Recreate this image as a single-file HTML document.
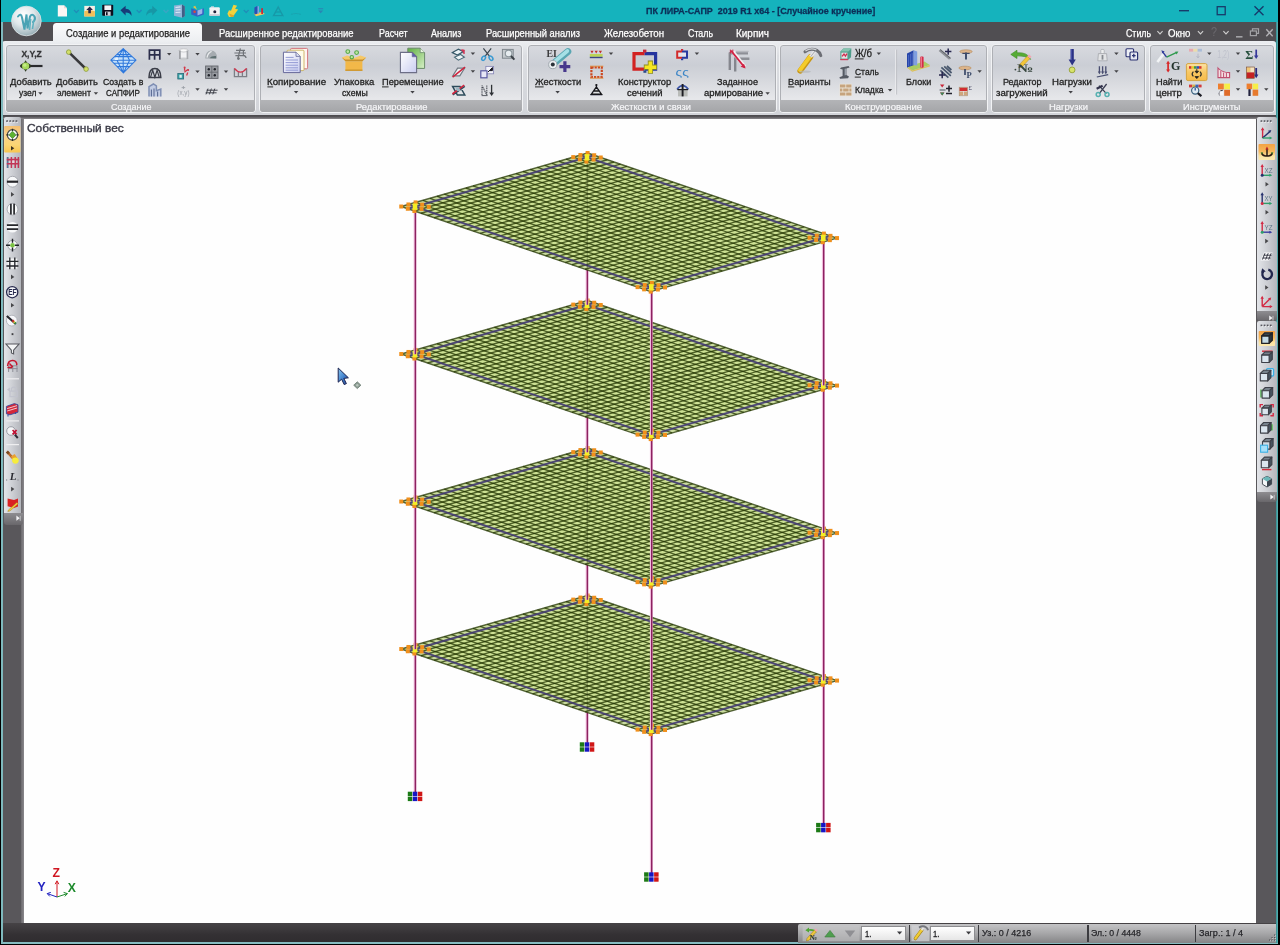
<!DOCTYPE html>
<html><head><meta charset="utf-8"><title>ПК ЛИРА-САПР</title>
<style>
html,body{margin:0;padding:0;background:#000;}
body{width:1280px;height:945px;position:relative;overflow:hidden;font-family:"Liberation Sans",sans-serif;}
.abs{position:absolute;}
.t{position:absolute;white-space:nowrap;line-height:1;transform-origin:0 50%;font-family:"Liberation Sans",sans-serif;}
div{box-sizing:border-box;}
.grp{position:absolute;top:44px;height:69px;border:1px solid #f2f3f5;border-radius:4px;background:linear-gradient(#d8dadf 0%,#cbced5 30%,#d6d8dd 52%,#e6e7ea 80%);overflow:hidden;box-shadow:0 0 0 1px #aeb0b5 inset;}
.grp .lb{position:absolute;left:0;right:0;top:55px;height:14px;background:linear-gradient(#b3b4b7,#a2a3a6);}
.sel{position:absolute;background:linear-gradient(#fbdc9c,#f5c35e 50%,#f3b440);border:1px solid #d9a446;border-radius:2px;}
</style></head><body>

<div class="abs" style="left:1px;top:0;width:1277.2px;height:943.6px;background:#15b3bd;"></div>
<div class="abs" style="left:2px;top:22px;width:1274px;height:20px;background:#504e52;"></div>
<div class="abs" style="left:2px;top:40.8px;width:1274px;height:74px;background:linear-gradient(#eceef1,#dcdee2 20%,#d2d4d9);border-radius:3px 3px 0 0;"></div>
<div class="abs" style="left:3px;top:114.5px;width:1272.8px;height:828px;background:#59575b;"></div><div class="abs" style="left:3px;top:114.5px;width:1272.8px;height:4.2px;background:linear-gradient(#4a484c,#545256 40%,#8b898d);"></div>
<div class="abs" style="left:3px;top:923px;width:1272.8px;height:19.5px;background:linear-gradient(#464346,#333033 60%,#2f2c2f);"></div>
<div class="abs" style="left:1px;top:942px;width:1277.2px;height:1.6px;background:#86bcc0;"></div>
<div class="abs" style="left:1.2px;top:22px;width:1.6px;height:921px;background:#7fb9bd;"></div>
<div class="abs" style="left:1275.8px;top:22px;width:2.4px;height:921px;background:linear-gradient(90deg,#338d92,#5db4b4);"></div>
<div class="abs" style="left:24px;top:118.6px;width:1231.8px;height:804.2px;background:#fefefe;"></div>
<div class="abs" style="left:21px;top:118.5px;width:3px;height:804.3px;background:linear-gradient(90deg,#6b696d,#8a888c);"></div>
<div class="abs" style="left:53px;top:23.3px;width:148.5px;height:19px;background:linear-gradient(#fbfbfc,#eceef1);border-radius:3.5px 3.5px 0 0;"></div>
<div class="t" style="left:646.00px;top:7.30px;font-size:9.2px;color:#0c2f58;transform:scaleX(0.9760);font-weight:bold;white-space:pre;-webkit-text-stroke:0.3px #0c2f58;">ПК ЛИРА-САПР  2019 R1 x64 - [Случайное кручение]</div>
<div class="t" style="left:65.50px;top:28.53px;font-size:10.0px;color:#1f1f1f;transform:scaleX(0.9411);-webkit-text-stroke:0.25px #1f1f1f;">Создание и редактирование</div>
<div class="t" style="left:218.50px;top:28.53px;font-size:10.0px;color:#fff;transform:scaleX(0.9466);-webkit-text-stroke:0.25px #fff;">Расширенное редактирование</div>
<div class="t" style="left:379.00px;top:28.53px;font-size:10.0px;color:#fff;transform:scaleX(0.8960);-webkit-text-stroke:0.25px #fff;">Расчет</div>
<div class="t" style="left:430.50px;top:28.53px;font-size:10.0px;color:#fff;transform:scaleX(0.9034);-webkit-text-stroke:0.25px #fff;">Анализ</div>
<div class="t" style="left:485.50px;top:28.53px;font-size:10.0px;color:#fff;transform:scaleX(0.9318);-webkit-text-stroke:0.25px #fff;">Расширенный анализ</div>
<div class="t" style="left:604.00px;top:28.53px;font-size:10.0px;color:#fff;transform:scaleX(0.9685);-webkit-text-stroke:0.25px #fff;">Железобетон</div>
<div class="t" style="left:687.50px;top:28.53px;font-size:10.0px;color:#fff;transform:scaleX(0.8835);-webkit-text-stroke:0.25px #fff;">Сталь</div>
<div class="t" style="left:736.00px;top:28.53px;font-size:10.0px;color:#fff;transform:scaleX(0.9945);-webkit-text-stroke:0.25px #fff;">Кирпич</div>
<div class="t" style="left:1126.00px;top:28.53px;font-size:10.0px;color:#fff;transform:scaleX(0.8792);-webkit-text-stroke:0.25px #fff;">Стиль</div>
<div class="t" style="left:1168.00px;top:28.53px;font-size:10.0px;color:#fff;transform:scaleX(0.9683);-webkit-text-stroke:0.25px #fff;">Окно</div>
<div class="grp" style="left:4.5px;width:251.5px;"><div class="lb"></div></div>
<div class="t" style="left:111.00px;top:101.55px;font-size:9.8px;color:#f6f6f8;transform:scaleX(0.9163);-webkit-text-stroke:0.2px #f6f6f8;">Создание</div>
<div class="grp" style="left:258.5px;width:264.5px;"><div class="lb"></div></div>
<div class="t" style="left:355.50px;top:101.55px;font-size:9.8px;color:#f6f6f8;transform:scaleX(0.9577);-webkit-text-stroke:0.2px #f6f6f8;">Редактирование</div>
<div class="grp" style="left:526.5px;width:250.0px;"><div class="lb"></div></div>
<div class="t" style="left:611.00px;top:101.55px;font-size:9.8px;color:#f6f6f8;transform:scaleX(0.9448);-webkit-text-stroke:0.2px #f6f6f8;">Жесткости и связи</div>
<div class="grp" style="left:779px;width:208.5px;"><div class="lb"></div></div>
<div class="t" style="left:845.00px;top:101.55px;font-size:9.8px;color:#f6f6f8;transform:scaleX(0.9691);-webkit-text-stroke:0.2px #f6f6f8;">Конструирование</div>
<div class="grp" style="left:990.5px;width:155.0px;"><div class="lb"></div></div>
<div class="t" style="left:1049.00px;top:101.55px;font-size:9.8px;color:#f6f6f8;transform:scaleX(0.9606);-webkit-text-stroke:0.2px #f6f6f8;">Нагрузки</div>
<div class="grp" style="left:1148.5px;width:126.5px;"><div class="lb"></div></div>
<div class="t" style="left:1183.00px;top:101.55px;font-size:9.8px;color:#f6f6f8;transform:scaleX(0.9410);-webkit-text-stroke:0.2px #f6f6f8;">Инструменты</div>
<div class="abs" style="left:3.5px;top:117px;width:17.8px;height:396px;background:linear-gradient(90deg,#e3e5e9,#cfd1d6 45%,#b4b6bc);border-radius:2px 2px 0 0;"></div>
<div class="abs" style="left:3.5px;top:512.5px;width:19px;height:12px;background:linear-gradient(#8e8d91,#69676b);border-radius:0 0 3px 3px;"></div>
<div class="abs" style="left:1257px;top:117px;width:19.5px;height:194.5px;background:linear-gradient(90deg,#e3e5e9,#cfd1d6 45%,#b4b6bc);border-radius:2px 2px 0 0;"></div>
<div class="abs" style="left:1257px;top:311px;width:19.5px;height:9.5px;background:linear-gradient(#8e8d91,#69676b);border-radius:0 0 3px 3px;"></div>
<div class="abs" style="left:1257px;top:321px;width:19.5px;height:171.5px;background:linear-gradient(90deg,#e3e5e9,#cfd1d6 45%,#b4b6bc);border-radius:2px 2px 0 0;"></div>
<div class="abs" style="left:1257px;top:492px;width:19.5px;height:9.5px;background:linear-gradient(#8e8d91,#69676b);border-radius:0 0 3px 3px;"></div>
<div class="abs" style="left:797.5px;top:924px;width:478.3px;height:18.5px;background:linear-gradient(#c4c4c6,#a9a9ab 45%,#858587);border-radius:2px 0 0 0;"></div>
<div class="abs" style="left:861px;top:926px;width:45px;height:15px;background:linear-gradient(#fff,#e6e6e6);border:1px solid #8d8d90;"></div>
<div class="abs" style="left:930px;top:926px;width:45px;height:15px;background:linear-gradient(#fff,#e6e6e6);border:1px solid #8d8d90;"></div>
<div class="abs" style="left:909px;top:925px;width:1.3px;height:16.5px;background:#3c3c40;"></div>
<div class="abs" style="left:978px;top:925px;width:1.3px;height:16.5px;background:#3c3c40;"></div>
<div class="abs" style="left:1087.4px;top:925px;width:1.3px;height:16.5px;background:#3c3c40;"></div>
<div class="abs" style="left:1195px;top:925px;width:1.3px;height:16.5px;background:#3c3c40;"></div>
<div class="t" style="left:864.70px;top:928.76px;font-size:9.6px;color:#1c1c20;transform:scaleX(0.7869);-webkit-text-stroke:0.3px #1c1c20;">1.</div>
<div class="t" style="left:933.00px;top:928.76px;font-size:9.6px;color:#1c1c20;transform:scaleX(0.7869);-webkit-text-stroke:0.3px #1c1c20;">1.</div>
<div class="t" style="left:981.60px;top:929.00px;font-size:9.2px;color:#26262a;transform:scaleX(0.9749);-webkit-text-stroke:0.25px #26262a;">Уз.: 0 / 4216</div>
<div class="t" style="left:1090.50px;top:929.00px;font-size:9.2px;color:#26262a;transform:scaleX(0.9469);-webkit-text-stroke:0.25px #26262a;">Эл.: 0 / 4448</div>
<div class="t" style="left:1198.80px;top:929.00px;font-size:9.2px;color:#26262a;transform:scaleX(0.9885);-webkit-text-stroke:0.25px #26262a;">Загр.: 1 / 4</div>
<div class="t" style="left:27.30px;top:122.67px;font-size:11.3px;color:#3a3a46;transform:scaleX(1.0563);-webkit-text-stroke:0.35px #3a3a46;">Собственный вес</div>
<svg class="abs" style="left:0;top:0" width="1280" height="945" viewBox="0 0 1280 945">
<defs>
<g id="plate"><polygon points="401.27,206.52 587.60,153.00 837.03,238.08 650.70,291.60" fill="#cadb9e"/><polygon points="415.00,206.70 587.00,157.30 823.30,237.90 651.30,287.30" fill="#cde194"/><path d="M401.27 206.52L587.60 153.00M407.83 208.76L594.17 155.24M414.40 211.00L600.73 157.48M420.96 213.24L607.29 159.72M427.52 215.47L613.86 161.96M434.09 217.71L620.42 164.20M440.65 219.95L626.99 166.44M447.22 222.19L633.55 168.68M453.78 224.43L640.11 170.91M460.34 226.67L646.68 173.15M466.91 228.91L653.24 175.39M473.47 231.15L659.81 177.63M480.04 233.39L666.37 179.87M486.60 235.62L672.93 182.11M493.16 237.86L679.50 184.35M499.73 240.10L686.06 186.59M506.29 242.34L692.62 188.83M512.86 244.58L699.19 191.06M519.42 246.82L705.75 193.30M525.98 249.06L712.32 195.54M532.55 251.30L718.88 197.78M539.11 253.54L725.44 200.02M545.67 255.77L732.01 202.26M552.24 258.01L738.57 204.50M558.80 260.25L745.14 206.74M565.37 262.49L751.70 208.98M571.93 264.73L758.26 211.21M578.49 266.97L764.83 213.45M585.06 269.21L771.39 215.69M591.62 271.45L777.96 217.93M598.19 273.69L784.52 220.17M604.75 275.93L791.08 222.41M611.31 278.16L797.65 224.65M617.88 280.40L804.21 226.89M624.44 282.64L810.78 229.12M631.01 284.88L817.34 231.36M637.57 287.12L823.90 233.60M644.13 289.36L830.47 235.84M650.70 291.60L837.03 238.08" stroke="#223400" stroke-opacity="0.75" stroke-width="1.4" fill="none"/><path d="M401.27 206.52L650.70 291.60M408.44 204.46L657.86 289.54M415.60 202.40L665.03 287.48M422.77 200.34L672.20 285.42M429.94 198.29L679.36 283.36M437.10 196.23L686.53 281.31M444.27 194.17L693.70 279.25M451.44 192.11L700.86 277.19M458.60 190.05L708.03 275.13M465.77 187.99L715.20 273.07M472.94 185.94L722.36 271.01M480.10 183.88L729.53 268.96M487.27 181.82L736.70 266.90M494.44 179.76L743.86 264.84M501.60 177.70L751.03 262.78M508.77 175.64L758.20 260.72M515.94 173.59L765.36 258.66M523.10 171.53L772.53 256.61M530.27 169.47L779.70 254.55M537.44 167.41L786.86 252.49M544.60 165.35L794.03 250.43M551.77 163.29L801.20 248.37M558.94 161.24L808.36 246.31M566.10 159.18L815.53 244.26M573.27 157.12L822.70 242.20M580.44 155.06L829.86 240.14M587.60 153.00L837.03 238.08" stroke="#223400" stroke-opacity="0.75" stroke-width="1.4" fill="none"/><path d="M407.83 208.76L594.17 155.24M644.13 289.36L830.47 235.84M408.44 204.46L657.86 289.54M580.44 155.06L829.86 240.14" stroke="#4c3c90" stroke-opacity="0.7" stroke-width="2.1" fill="none"/></g>
<g id="mk"><rect x="-15.73" y="-2.18" width="4" height="4" fill="#f0901f"/><rect x="-9.17" y="0.06" width="4" height="4" fill="#f0901f"/><rect x="-2.60" y="2.30" width="4" height="4" fill="#f0901f"/><rect x="-8.56" y="-4.24" width="4" height="4" fill="#f0901f"/><rect x="4.56" y="0.24" width="4" height="4" fill="#f0901f"/><rect x="-1.40" y="-6.30" width="4" height="4" fill="#f0901f"/><rect x="5.17" y="-4.06" width="4" height="4" fill="#f0901f"/><rect x="11.73" y="-1.82" width="4" height="4" fill="#f0901f"/><rect x="-2.3" y="-3.2" width="4.6" height="6.4" fill="#f4ee25"/></g>
<g id="sup"><rect x="-7.2" y="-4.6" width="4.5" height="4.4" fill="#1c7a16"/><rect x="-7.2" y="0.4" width="4.5" height="4.4" fill="#1c7a16"/><rect x="-2.2" y="-4.6" width="4.5" height="4.4" fill="#1212c4"/><rect x="-2.2" y="0.4" width="4.5" height="4.4" fill="#1212c4"/><rect x="2.8" y="-4.6" width="4.5" height="4.4" fill="#d01414"/><rect x="2.8" y="0.4" width="4.5" height="4.4" fill="#d01414"/></g>
<filter id="bl" x="-5%" y="-5%" width="110%" height="110%"><feGaussianBlur stdDeviation="0.5"/></filter>
</defs>
<g filter="url(#bl)">
<line x1="415.00" y1="649.20" x2="415.00" y2="792.20" stroke="#f4c2e2" stroke-width="2.8"/><line x1="415.40" y1="649.20" x2="415.40" y2="792.20" stroke="#8c2060" stroke-width="1.5"/>
<line x1="587.00" y1="599.80" x2="587.00" y2="742.80" stroke="#f4c2e2" stroke-width="2.8"/><line x1="587.40" y1="599.80" x2="587.40" y2="742.80" stroke="#8c2060" stroke-width="1.5"/>
<line x1="823.30" y1="680.40" x2="823.30" y2="823.40" stroke="#f4c2e2" stroke-width="2.8"/><line x1="823.70" y1="680.40" x2="823.70" y2="823.40" stroke="#8c2060" stroke-width="1.5"/>
<line x1="651.30" y1="729.80" x2="651.30" y2="872.80" stroke="#f4c2e2" stroke-width="2.8"/><line x1="651.70" y1="729.80" x2="651.70" y2="872.80" stroke="#8c2060" stroke-width="1.5"/>
<use href="#sup" x="415.00" y="796.30"/>
<use href="#sup" x="587.00" y="746.90"/>
<use href="#sup" x="823.30" y="827.50"/>
<use href="#sup" x="651.30" y="876.90"/>
<use href="#plate" y="442.50"/>
<line x1="587.30" y1="604.80" x2="587.30" y2="710.80" stroke="#1e2a08" stroke-opacity="0.3" stroke-width="1.5"/>
<use href="#mk" x="415.00" y="649.20"/>
<use href="#mk" x="587.00" y="599.80"/>
<use href="#mk" x="823.30" y="680.40"/>
<use href="#mk" x="651.30" y="729.80"/>
<line x1="415.00" y1="501.70" x2="415.00" y2="649.20" stroke="#f4c2e2" stroke-width="2.8"/><line x1="415.40" y1="501.70" x2="415.40" y2="649.20" stroke="#8c2060" stroke-width="1.5"/>
<line x1="587.00" y1="452.30" x2="587.00" y2="599.80" stroke="#f4c2e2" stroke-width="2.8"/><line x1="587.40" y1="452.30" x2="587.40" y2="599.80" stroke="#8c2060" stroke-width="1.5"/>
<line x1="823.30" y1="532.90" x2="823.30" y2="680.40" stroke="#f4c2e2" stroke-width="2.8"/><line x1="823.70" y1="532.90" x2="823.70" y2="680.40" stroke="#8c2060" stroke-width="1.5"/>
<line x1="651.30" y1="582.30" x2="651.30" y2="729.80" stroke="#f4c2e2" stroke-width="2.8"/><line x1="651.70" y1="582.30" x2="651.70" y2="729.80" stroke="#8c2060" stroke-width="1.5"/>
<use href="#plate" y="295.00"/>
<line x1="587.30" y1="457.30" x2="587.30" y2="563.30" stroke="#1e2a08" stroke-opacity="0.3" stroke-width="1.5"/>
<use href="#mk" x="415.00" y="501.70"/>
<use href="#mk" x="587.00" y="452.30"/>
<use href="#mk" x="823.30" y="532.90"/>
<use href="#mk" x="651.30" y="582.30"/>
<line x1="415.00" y1="354.20" x2="415.00" y2="501.70" stroke="#f4c2e2" stroke-width="2.8"/><line x1="415.40" y1="354.20" x2="415.40" y2="501.70" stroke="#8c2060" stroke-width="1.5"/>
<line x1="587.00" y1="304.80" x2="587.00" y2="452.30" stroke="#f4c2e2" stroke-width="2.8"/><line x1="587.40" y1="304.80" x2="587.40" y2="452.30" stroke="#8c2060" stroke-width="1.5"/>
<line x1="823.30" y1="385.40" x2="823.30" y2="532.90" stroke="#f4c2e2" stroke-width="2.8"/><line x1="823.70" y1="385.40" x2="823.70" y2="532.90" stroke="#8c2060" stroke-width="1.5"/>
<line x1="651.30" y1="434.80" x2="651.30" y2="582.30" stroke="#f4c2e2" stroke-width="2.8"/><line x1="651.70" y1="434.80" x2="651.70" y2="582.30" stroke="#8c2060" stroke-width="1.5"/>
<use href="#plate" y="147.50"/>
<line x1="587.30" y1="309.80" x2="587.30" y2="415.80" stroke="#1e2a08" stroke-opacity="0.3" stroke-width="1.5"/>
<use href="#mk" x="415.00" y="354.20"/>
<use href="#mk" x="587.00" y="304.80"/>
<use href="#mk" x="823.30" y="385.40"/>
<use href="#mk" x="651.30" y="434.80"/>
<line x1="415.00" y1="206.70" x2="415.00" y2="354.20" stroke="#f4c2e2" stroke-width="2.8"/><line x1="415.40" y1="206.70" x2="415.40" y2="354.20" stroke="#8c2060" stroke-width="1.5"/>
<line x1="587.00" y1="157.30" x2="587.00" y2="304.80" stroke="#f4c2e2" stroke-width="2.8"/><line x1="587.40" y1="157.30" x2="587.40" y2="304.80" stroke="#8c2060" stroke-width="1.5"/>
<line x1="823.30" y1="237.90" x2="823.30" y2="385.40" stroke="#f4c2e2" stroke-width="2.8"/><line x1="823.70" y1="237.90" x2="823.70" y2="385.40" stroke="#8c2060" stroke-width="1.5"/>
<line x1="651.30" y1="287.30" x2="651.30" y2="434.80" stroke="#f4c2e2" stroke-width="2.8"/><line x1="651.70" y1="287.30" x2="651.70" y2="434.80" stroke="#8c2060" stroke-width="1.5"/>
<use href="#plate" y="0.00"/>
<line x1="587.30" y1="162.30" x2="587.30" y2="268.30" stroke="#1e2a08" stroke-opacity="0.3" stroke-width="1.5"/>
<use href="#mk" x="415.00" y="206.70"/>
<use href="#mk" x="587.00" y="157.30"/>
<use href="#mk" x="823.30" y="237.90"/>
<use href="#mk" x="651.30" y="287.30"/>
</g>
</svg>
<div class="t" style="left:10.00px;top:76.91px;font-size:9.7px;color:#232323;transform:scaleX(0.9751);-webkit-text-stroke:0.3px #232323;">Добавить</div>
<div class="t" style="left:18.80px;top:87.51px;font-size:9.7px;color:#232323;transform:scaleX(0.8785);-webkit-text-stroke:0.3px #232323;">узел</div>
<div class="t" style="left:56.30px;top:76.91px;font-size:9.7px;color:#232323;transform:scaleX(0.9774);-webkit-text-stroke:0.3px #232323;">Добавить</div>
<div class="t" style="left:56.90px;top:87.51px;font-size:9.7px;color:#232323;transform:scaleX(0.9029);-webkit-text-stroke:0.3px #232323;">элемент</div>
<div class="t" style="left:103.20px;top:76.91px;font-size:9.7px;color:#232323;transform:scaleX(0.9036);-webkit-text-stroke:0.3px #232323;">Создать в</div>
<div class="t" style="left:106.00px;top:87.51px;font-size:9.7px;color:#232323;transform:scaleX(0.8305);-webkit-text-stroke:0.3px #232323;">САПФИР</div>
<div class="t" style="left:267.40px;top:76.91px;font-size:9.7px;color:#232323;transform:scaleX(1.0014);-webkit-text-stroke:0.3px #232323;">Копирование</div>
<div class="t" style="left:334.20px;top:76.91px;font-size:9.7px;color:#232323;transform:scaleX(0.9824);-webkit-text-stroke:0.3px #232323;">Упаковка</div>
<div class="t" style="left:341.80px;top:87.51px;font-size:9.7px;color:#232323;transform:scaleX(0.9013);-webkit-text-stroke:0.3px #232323;">схемы</div>
<div class="t" style="left:382.00px;top:76.91px;font-size:9.7px;color:#232323;transform:scaleX(0.9527);-webkit-text-stroke:0.3px #232323;">Перемещение</div>
<div class="t" style="left:535.00px;top:76.91px;font-size:9.7px;color:#232323;transform:scaleX(0.9649);-webkit-text-stroke:0.3px #232323;">Жесткости</div>
<div class="t" style="left:618.20px;top:76.91px;font-size:9.7px;color:#232323;transform:scaleX(0.9637);-webkit-text-stroke:0.3px #232323;">Конструктор</div>
<div class="t" style="left:627.00px;top:87.51px;font-size:9.7px;color:#232323;transform:scaleX(0.9763);-webkit-text-stroke:0.3px #232323;">сечений</div>
<div class="t" style="left:717.20px;top:76.91px;font-size:9.7px;color:#232323;transform:scaleX(0.9358);-webkit-text-stroke:0.3px #232323;">Заданное</div>
<div class="t" style="left:704.30px;top:87.51px;font-size:9.7px;color:#232323;transform:scaleX(0.9822);-webkit-text-stroke:0.3px #232323;">армирование</div>
<div class="t" style="left:788.00px;top:76.91px;font-size:9.7px;color:#232323;transform:scaleX(0.9544);-webkit-text-stroke:0.3px #232323;">Варианты</div>
<div class="t" style="left:854.80px;top:48.26px;font-size:10.8px;color:#232323;transform:scaleX(0.8873);-webkit-text-stroke:0.3px #232323;">Ж/б</div>
<div class="t" style="left:854.80px;top:67.11px;font-size:9.7px;color:#232323;transform:scaleX(0.8744);-webkit-text-stroke:0.3px #232323;">Сталь</div>
<div class="t" style="left:854.80px;top:84.61px;font-size:9.7px;color:#232323;transform:scaleX(0.8908);-webkit-text-stroke:0.3px #232323;">Кладка</div>
<div class="t" style="left:905.60px;top:76.91px;font-size:9.7px;color:#232323;transform:scaleX(0.9305);-webkit-text-stroke:0.3px #232323;">Блоки</div>
<div class="t" style="left:1002.90px;top:76.91px;font-size:9.7px;color:#232323;transform:scaleX(0.9244);-webkit-text-stroke:0.3px #232323;">Редактор</div>
<div class="t" style="left:995.80px;top:87.51px;font-size:9.7px;color:#232323;transform:scaleX(0.9999);-webkit-text-stroke:0.3px #232323;">загружений</div>
<div class="t" style="left:1051.70px;top:76.91px;font-size:9.7px;color:#232323;transform:scaleX(0.9929);-webkit-text-stroke:0.3px #232323;">Нагрузки</div>
<div class="t" style="left:1155.50px;top:76.91px;font-size:9.7px;color:#232323;transform:scaleX(0.9538);-webkit-text-stroke:0.3px #232323;">Найти</div>
<div class="t" style="left:1156.00px;top:87.51px;font-size:9.7px;color:#232323;transform:scaleX(0.9948);-webkit-text-stroke:0.3px #232323;">центр</div>
<div class="t" style="left:1210.50px;top:26.36px;font-size:12px;color:#6c6a6f;transform:scaleX(0.8990);">?</div>
<svg class="abs" style="left:0;top:0" width="1280" height="120" viewBox="0 0 1280 120"><defs><filter id="b3" x="-2%" y="-10%" width="104%" height="120%"><feGaussianBlur stdDeviation="0.45"/></filter></defs><g filter="url(#b3)"><path d="M38.2 92.2L42.6 92.2L40.4 94.7Z" fill="#434346"/><path d="M93.7 92.2L98.1 92.2L95.9 94.7Z" fill="#434346"/><rect x="267.4" y="86.4" width="5.7" height="1" fill="#232323"/><path d="M293.9 91.1L298.3 91.1L296.1 93.6Z" fill="#434346"/><rect x="382.0" y="86.4" width="6.6" height="1" fill="#232323"/><path d="M410.3 91.1L414.7 91.1L412.5 93.6Z" fill="#434346"/><rect x="535.0" y="86.4" width="8.6" height="1" fill="#232323"/><path d="M555.4 91.1L559.8 91.1L557.6 93.6Z" fill="#434346"/><path d="M765.4 92.2L769.8 92.2L767.6 94.7Z" fill="#434346"/><rect x="788.0" y="86.4" width="6.2" height="1" fill="#232323"/><rect x="854.8" y="58.4" width="8.8" height="1" fill="#232323"/><path d="M876.6 52.6L881.0 52.6L878.8 55.1Z" fill="#434346"/><rect x="854.8" y="76.6" width="6.1" height="1" fill="#232323"/><path d="M887.8 88.9L892.2 88.9L890.0 91.4Z" fill="#434346"/><path d="M1068.5 91.1L1072.9 91.1L1070.7 93.6Z" fill="#434346"/><rect x="895.3" y="49.6" width="1" height="45" fill="#f0f0f2"/><rect x="896.3" y="49.6" width="0.8" height="45" fill="#b8babf"/><path d="M1157.4 31.1L1160 33.9L1162.6 31.1" stroke="#cfcfcf" stroke-width="1.1" fill="none"/><path d="M1197.9 31.1L1200.5 33.9L1203.1 31.1" stroke="#cfcfcf" stroke-width="1.1" fill="none"/><path d="M1223.4 31.1L1226 33.9L1228.6 31.1" stroke="#cfcfcf" stroke-width="1.1" fill="none"/><rect x="1236" y="36" width="6.5" height="1.6" fill="#a2a2a6"/><rect x="1252.5" y="28.8" width="6" height="4.6" fill="none" stroke="#a2a2a6" stroke-width="1.2"/><rect x="1250.4" y="31" width="6" height="4.6" fill="#4c4a4d" stroke="#a2a2a6" stroke-width="1.2"/><path d="M1266.3 29.3L1272.7 36.3M1272.7 29.3L1266.3 36.3" stroke="#b0b0b4" stroke-width="1.4"/><rect x="1179" y="10" width="10" height="1.4" fill="#173a6a"/><rect x="1217.2" y="6.7" width="8" height="8" fill="none" stroke="#173a6a" stroke-width="1.3"/><path d="M1254.5 6.3L1263.5 15.3M1263.5 6.3L1254.5 15.3" stroke="#173a6a" stroke-width="1.4"/><path d="M167.0 52.9L171.4 52.9L169.2 55.4Z" fill="#434346"/><path d="M195.3 52.9L199.7 52.9L197.5 55.4Z" fill="#434346"/><path d="M195.3 70.4L199.7 70.4L197.5 72.9Z" fill="#434346"/><path d="M195.3 88.2L199.7 88.2L197.5 90.7Z" fill="#434346"/><path d="M223.8 70.4L228.2 70.4L226.0 72.9Z" fill="#434346"/><path d="M223.8 88.2L228.2 88.2L226.0 90.7Z" fill="#434346"/><path d="M470.7 52.6L475.1 52.6L472.9 55.1Z" fill="#434346"/><path d="M470.7 70.2L475.1 70.2L472.9 72.7Z" fill="#434346"/><path d="M608.8 52.4L613.2 52.4L611.0 54.9Z" fill="#434346"/><path d="M694.7 52.6L699.1 52.6L696.9 55.1Z" fill="#434346"/><path d="M977.4 70.2L981.8 70.2L979.6 72.7Z" fill="#434346"/><path d="M1114.2 52.6L1118.6 52.6L1116.4 55.1Z" fill="#434346"/><path d="M1114.2 70.2L1118.6 70.2L1116.4 72.7Z" fill="#434346"/><path d="M1207.1 52.6L1211.5 52.6L1209.3 55.1Z" fill="#434346"/><path d="M1235.8 52.6L1240.2 52.6L1238.0 55.1Z" fill="#434346"/><path d="M1235.8 70.2L1240.2 70.2L1238.0 72.7Z" fill="#434346"/><path d="M1235.8 88.2L1240.2 88.2L1238.0 90.7Z" fill="#434346"/><path d="M1264.1 88.2L1268.5 88.2L1266.3 90.7Z" fill="#434346"/><defs><radialGradient id="orb" cx="0.4" cy="0.3" r="0.8"><stop offset="0" stop-color="#ffffff"/><stop offset="0.45" stop-color="#dfe7ea"/><stop offset="0.8" stop-color="#a9bcc3"/><stop offset="1" stop-color="#7c949d"/></radialGradient><linearGradient id="pg" x1="0" y1="0" x2="1" y2="1"><stop offset="0" stop-color="#ffffff"/><stop offset="1" stop-color="#c9cdf0"/></linearGradient><linearGradient id="gg" x1="0" y1="0" x2="1" y2="1"><stop offset="0" stop-color="#5fb040"/><stop offset="1" stop-color="#d8f0c8"/></linearGradient><linearGradient id="selg" x1="0" y1="0" x2="0" y2="1"><stop offset="0" stop-color="#fde3a8"/><stop offset="0.5" stop-color="#f8c864"/><stop offset="1" stop-color="#f6bb4a"/></linearGradient></defs><circle cx="26.4" cy="21" r="14.8" fill="url(#orb)" stroke="#dfe6e8" stroke-width="0.8"/><path d="M18 16.5q3-4 4 1l2.5 12 2-15 1 14 2.5-12q2-3.5 4.5 0q1.5 3-1.5 5.5" stroke="#4aa3b4" stroke-width="2" fill="none" stroke-linecap="round"/><path d="M29.5 30l1.2-11M32.5 29l1.3-9" stroke="#5fb1c0" stroke-width="1.6" fill="none"/><path d="M57.8 5.3h6.2l3 3v8.2h-9.2z" fill="#fbf6f4"/><path d="M64 5.3v3h3z" fill="#e8d8d4"/><path d="M74.0 10.0L76.4 12.5L78.80000000000001 10.0" stroke="#1f8fb8" stroke-width="1.3" fill="none"/><rect x="84.3" y="5.9" width="10.6" height="10.5" fill="#f4efe6"/><path d="M84.3 11.2q5-2 10.6 0v5.2h-10.6z" fill="#f0bf5a"/><path d="M89.7 6.5l3.2 3.6h-2v3.2h-2.6v-3.2h-2z" fill="#262648"/><rect x="102.2" y="4.8" width="11" height="11" rx="0.8" fill="#10101e"/><rect x="104.4" y="5.4" width="6.8" height="4.6" fill="#f3f3f6"/><rect x="105" y="11.6" width="5.6" height="4.2" fill="#cfd2da"/><rect x="106" y="12.2" width="1.6" height="3" fill="#10101e"/><path d="M120.4 10.2l5.2-4.4v2.9q6 0.2 6 7.2q-1.8-3.4-6-3.4v2.9z" fill="#173a78"/><path d="M136.7 10.0L139.1 12.5L141.5 10.0" stroke="#1f8fb8" stroke-width="1.3" fill="none"/><path d="M157.4 10.2l-5.2-4.4v2.9q-6 0.2-6 7.2q1.8-3.4 6-3.4v2.9z" fill="#1897a6"/><path d="M163.6 10.0L166 12.5L168.4 10.0" stroke="#3aa6c4" stroke-width="1.3" fill="none"/><path d="M174 5.6l8-1 2.8 1.6v10l-2.8 1.6-8-2z" fill="#8fb3d6"/><path d="M182 4.6l2.8 1.6v10l-2.8 1.6z" fill="#3f5f86"/><path d="M175.5 7.5l5-.6M175.5 10l5-.4M175.5 12.5l5-.2" stroke="#dbe8f5" stroke-width="1.1"/><path d="M191.2 8.2l6.3 2.4 6.3-2.4v6.2l-6.3 2.4-6.3-2.4z" fill="#3560c4"/><path d="M197.5 10.6l4.8-1.8v4.8l-4.8 1.8z" fill="#9db4e8"/><path d="M193 7l2.2-1.2 1.8 4" fill="#f0c040"/><circle cx="194.6" cy="11.8" r="1.3" fill="#d84a3a"/><rect x="209.4" y="7.2" width="10.4" height="8.6" rx="1" fill="#f2f2f4"/><rect x="211" y="6.4" width="3" height="1.4" fill="#e0e0e6"/><circle cx="214.8" cy="11.8" r="1.5" fill="#23233a"/><rect x="209.4" y="14.2" width="10.4" height="1.6" fill="#c8c8d4"/><path d="M233.5 4.8l3.6 1-2 3 3 .6-5.5 7.6h-3.6l-1.6-3.2 1.6-3.6 2 .6z" fill="#f2d23c"/><path d="M229 13.5l1.8 3.5h2.6l1-1.4z" fill="#e0a82a"/><path d="M243.79999999999998 10.0L246.2 12.5L248.6 10.0" stroke="#1f8fb8" stroke-width="1.3" fill="none"/><path d="M253.6 13.4l8.5-1.4 2.8 2-8.8 2.2z" fill="#ecc95a"/><path d="M254.4 7.6l3.2-1.8v8l-3.2.6z" fill="#2b4fb4"/><path d="M257.6 5.8l1.4.6v7.4l-1.4.2z" fill="#86a2e2"/><rect x="261.2" y="8.2" width="1.8" height="5.8" fill="#d0283a"/><path d="M278.2 7l4.6 8.6h-9.2z" fill="none" stroke="#1899a8" stroke-width="1.4"/><path d="M276 12h4.4" stroke="#1899a8" stroke-width="1.2"/><path d="M291 14.5q5-2 10 0" stroke="#1aa6b2" stroke-width="1.2" fill="none"/><rect x="318.2" y="8.2" width="5" height="1.1" fill="#2a86b4"/><path d="M318.1 10.5h5.2l-2.6 2.8z" fill="#2a86b4"/><text x="21.4" y="57.3" font-family="Liberation Sans" font-weight="bold" font-size="9.8" fill="#343436" stroke="#343436" stroke-width="0.3" textLength="20.4" lengthAdjust="spacingAndGlyphs">X,Y,Z</text><rect x="29" y="64.9" width="13.5" height="2.2" fill="#2b2b2d"/><path d="M25.6 60.2l1.4 2.2 3.4 2.2 1 1.4-1 1.4-3.4 2.2-1.4 2.2-1.4-2.2-3.4-2.2-1-1.4 1-1.4 3.4-2.2z" fill="#2e3a22"/><circle cx="25.6" cy="66" r="3.6" fill="#a6d95c"/><circle cx="24.8" cy="65.2" r="1.6" fill="#c4ec84"/><path d="M68.8 52.2L86 69" stroke="#38383a" stroke-width="2.5" stroke-linecap="round"/><circle cx="68.7" cy="52.1" r="2.3" fill="#d3df6a" stroke="#8a9a3a" stroke-width="0.8"/><circle cx="86.1" cy="69.1" r="2.3" fill="#d3df6a" stroke="#8a9a3a" stroke-width="0.8"/><path d="M123.2 48.6L110.8 60.2 123.4 73 136 60.2z" fill="#c4e0fa"/><path d="M123.2 48.6L110.8 60.2 123.4 73 136 60.2zM110.8 60.2h25.2M123.2 48.6L117 60.2 123.4 73 129.6 60.2zM123.2 48.6v24.4M114.5 56.6h17.6M116.4 54.6h13.8M113.6 63.2h19.8M117 66.6h13" stroke="#2f78dc" stroke-width="1.05" fill="none" stroke-linejoin="round"/><path d="M116 57.6l3-0.2-1.2 2.6h-3.4z" fill="#e8f4ff"/><path d="M149.4 59.8v-9.6h10.4v9.6M154.6 50.2v9.6M149.4 54.8h10.4" stroke="#2b2e4c" stroke-width="1.7" fill="none"/><path d="M149 77.6q0-9.2 5.9-9.2q5.900 0 5.900 9.2z" stroke="#3a3d47" stroke-width="1.5" fill="none"/><path d="M150.6 77.2l2.100-7 2.200 7 2.200-7 2.100 7" stroke="#3a3d47" stroke-width="1.2" fill="none"/><path d="M149 96.600v-10l4.400-2.600 3 2v4.600l4.400-1.600v7.600" stroke="#7f8fb4" stroke-width="1.5" fill="#c3cde4"/><path d="M151.400 96.600v-7M154 96.600v-8M157.600 96.600v-5" stroke="#5c6c94" stroke-width="1.100"/><rect x="179" y="50.200" width="9.400" height="9" fill="#f2f2f4"/><ellipse cx="183.700" cy="50.400" rx="4.700" ry="1.600" fill="#fafafa" stroke="#b0b2b6" stroke-width="0.600"/><ellipse cx="183.700" cy="59" rx="4.700" ry="1.400" fill="#c8cacd"/><rect x="179" y="50.400" width="1.800" height="8.600" fill="#9fa1a6"/><rect x="186.600" y="50.400" width="1.800" height="8.600" fill="#a6a8ad"/><rect x="177.800" y="73.400" width="5.800" height="5.600" fill="#3aa3a8" stroke="#2a6a78" stroke-width="0.800"/><rect x="179.400" y="74.800" width="2.400" height="3" fill="#d9f0f0"/><path d="M184.400 72.200l3.400-2.600M184.600 67.400v3.400M187.800 72.600l-1.200 3" stroke="#d23a4a" stroke-width="1.300"/><circle cx="184.600" cy="67.600" r="1" fill="#d23a4a"/><circle cx="188.200" cy="70" r="1" fill="#d23a4a"/><text x="177.300" y="94.600" font-family="Liberation Sans" font-size="6.400" fill="#9da1a8" textLength="12.200" lengthAdjust="spacingAndGlyphs">(x,y)</text><path d="M181.600 87.600h3.600M183.400 86v3" stroke="#9da1a8" stroke-width="0.900"/><path d="M205.200 58.400q0.400-7.800 6-7.800q5.600 0 6 7.800z" fill="#a5abb0"/><path d="M207 57.600q1-5 4.600-6.200" stroke="#e8eaec" stroke-width="1.300" fill="none"/><path d="M209.400 58.200q2-2.600 6.600-2.200v2.400z" fill="#5f7072"/><rect x="205.600" y="66" width="12.400" height="12.400" fill="#9a9da3" stroke="#62656c" stroke-width="0.900"/><path d="M211.800 66v12.400M205.600 72.200h12.400" stroke="#62656c" stroke-width="0.800"/><circle cx="208.800" cy="69.200" r="1.200" fill="#23252c"/><circle cx="214.800" cy="69.200" r="1.200" fill="#23252c"/><circle cx="208.800" cy="75.200" r="1.200" fill="#23252c"/><circle cx="214.800" cy="75.200" r="1.200" fill="#23252c"/><path d="M206 94.400l2-5.800M209.400 94.400l2-5.800M212.800 94.400l2-5.800M205.600 92.800h11M206.600 90.200h11" stroke="#3f424a" stroke-width="1" fill="none"/><path d="M236 50.400h9M234.400 53h11.600M235.400 55.600h10M240.400 48.400l-2.400 9.600M243.400 50v5.600q2.600 0.400 2.600 2.400" stroke="#6f7378" stroke-width="1.200" fill="none"/><circle cx="238.400" cy="58.600" r="1.400" fill="#6f7378"/><path d="M234.400 68.600v8h12.200v-8M238.400 72v4.600M242.400 72v4.600" stroke="#7b7f86" stroke-width="1.300" fill="none"/><path d="M234.400 68.400q6.100 7.400 12.200 0" stroke="#d2324a" stroke-width="1.400" fill="none"/><rect x="290.600" y="48.400" width="17" height="20.400" rx="1" fill="#fff4f2" stroke="#d06a72" stroke-width="0.900"/><rect x="287" y="50.200" width="17" height="20.400" rx="1" fill="#fffbea" stroke="#c8b060" stroke-width="0.900"/><path d="M283.400 52.200h12.600l4.200 4.200v16.200h-16.800z" fill="url(#pg)" stroke="#66689a" stroke-width="1"/><path d="M296 52.200v4.200h4.200" fill="#dfe2f4" stroke="#66689a" stroke-width="0.800"/><path d="M285.600 57.400h8M285.600 60h12.400M285.600 62.600h12.400M285.600 65.200h12.400M285.600 67.800h12.400M285.600 70.200h12.400" stroke="#8b93d0" stroke-width="0.900"/><path d="M345.400 61.200h17v9.600h-17z" fill="#f2b848"/><path d="M345.400 61.200l-3.600-3.800 5.400-1.800 6.800 2.400 6.600-2.400 5.600 1.800-3.800 3.800z" fill="#f6c868"/><path d="M345.400 61.200h17l3.800-3.800-3.600 2.200h-17.400l-3.400-2.200z" fill="#c8902c"/><rect x="345.400" y="69.400" width="17" height="1.600" fill="#d09a34"/><circle cx="347.800" cy="51.600" r="1.900" fill="#bfe6a0" stroke="#57a84a" stroke-width="1.100"/><circle cx="356.600" cy="52.600" r="1.900" fill="#bfe6a0" stroke="#57a84a" stroke-width="1.100"/><circle cx="351.800" cy="57.200" r="1.700" fill="#bfe6a0" stroke="#57a84a" stroke-width="1.100"/><path d="M407.800 48.200h12.400l4.400 4.400v15.800h-16.800z" fill="url(#gg)" stroke="#6a8a6a" stroke-width="1"/><path d="M420.200 48.200v4.400h4.400" fill="#e8f6e0" stroke="#6a8a6a" stroke-width="0.800"/><path d="M400.400 52.400h11.800l4.400 4.400v15.800h-16.200z" fill="url(#pg)" stroke="#6c6e86" stroke-width="1.100"/><path d="M412.200 52.400v4.400h4.400" fill="#5c5cae" stroke="#6c6e86" stroke-width="0.600"/><path d="M452.400 52.600l6-3.400 5 2.400-6 3.400z" fill="#e9f2f6" stroke="#365868" stroke-width="1.200"/><path d="M454.400 57.200l6-2.800 4 2.800-6 3z" fill="#eef4f6" stroke="#4a6a78" stroke-width="1.100"/><path d="M461.400 49.800q3 1 2.600 4" stroke="#d03654" stroke-width="1.500" fill="none"/><circle cx="463.600" cy="50.600" r="1.200" fill="#d03654"/><path d="M452.800 75.800l4.800-7.600h7l-4.800 7.600z" fill="#eef0f2" stroke="#707a82" stroke-width="1.200"/><path d="M452.600 77.200l12.400-10" stroke="#d0243e" stroke-width="1.500"/><path d="M452.600 86.400h7.400l4.800 8.600h-7.400zM464.800 86.400l-12 8.600" fill="none" stroke="#2d4c5c" stroke-width="1.500"/><path d="M452.400 94l11.800-8.800" stroke="#d0243e" stroke-width="1.600"/><path d="M455 87.600h4l2 3.400h-4z" fill="#9ab4c0"/><path d="M483.400 48.400l6.600 8.400M491.200 48.400l-6.600 8.400" stroke="#3b464e" stroke-width="1.200"/><ellipse cx="483.600" cy="58.200" rx="1.600" ry="2.400" transform="rotate(35 483.600 58.200)" fill="none" stroke="#3a9ad2" stroke-width="1.500"/><ellipse cx="491" cy="58.200" rx="1.600" ry="2.400" transform="rotate(-35 491 58.200)" fill="none" stroke="#3a9ad2" stroke-width="1.500"/><rect x="485.800" y="66.400" width="7.800" height="7.400" fill="#f4f4fa" stroke="#8b8bb8" stroke-width="0.900"/><rect x="480.800" y="70.800" width="6.200" height="7" fill="#e6e6f6" stroke="#5a5aa2" stroke-width="1.200"/><path d="M488 72l4-4M492.400 67.600v3h-3z" stroke="#15151f" stroke-width="1" fill="#15151f"/><path d="M482 95v-9.600l4.800 9.600v-9.600" stroke="#4a4e56" stroke-width="1.100" fill="none" stroke-dasharray="1.500 0.700"/><path d="M491.600 84.800v9" stroke="#2e3036" stroke-width="1.300"/><path d="M489.200 92.600h4.800l-2.400 3.400z" fill="#2e3036"/><path d="M481.600 95.600h6" stroke="#4a4e56" stroke-width="0.900"/><rect x="502.400" y="49.400" width="10.800" height="8.800" fill="#c4c9cd" stroke="#7f868c" stroke-width="1"/><circle cx="508.600" cy="53.400" r="3.300" fill="#e6ecef" stroke="#8c969c" stroke-width="1.100"/><path d="M511 56l3.400 3.600" stroke="#3a4046" stroke-width="2"/><text x="546.400" y="57.400" font-family="Liberation Serif" font-weight="bold" font-size="9.600" fill="#3c3c3e" textLength="10.400" lengthAdjust="spacingAndGlyphs">EI</text><path d="M552.600 64.400L567.800 51.600" stroke="#5aa6b2" stroke-width="7" stroke-linecap="round"/><path d="M552.600 63.400L567.400 51" stroke="#a6e0e6" stroke-width="3.600" stroke-linecap="round"/><circle cx="552.800" cy="64.600" r="4.100" fill="#eef1f3" stroke="#9aa2a8" stroke-width="0.900"/><circle cx="552.800" cy="64.600" r="2" fill="#2b3138"/><path d="M564.900 61.200v10.800M559.500 66.600h10.800" stroke="#46378c" stroke-width="3.200"/><path d="M590.400 50.800l1.600 2.800 1.600-2.800zM594.600 50.800l1.600 2.800 1.600-2.800zM598.800 50.800l1.600 2.800 1.600-2.800z" fill="#c2302e"/><rect x="589.800" y="54" width="12.800" height="2.800" fill="#bcd456"/><rect x="589.800" y="56.800" width="12.800" height="1.400" fill="#3b4686"/><rect x="591.400" y="67.400" width="10.400" height="9.600" fill="none" stroke="#cc4a22" stroke-width="2.200" stroke-dasharray="2.200 1"/><path d="M590 66.200h13.400M590 78.200h13.400" stroke="#e08a3a" stroke-width="0.900"/><path d="M596.400 84.400v2.400M596.400 86.800l-5 7.400h10zM593.600 91h5.600" stroke="#17171b" stroke-width="1.300" fill="none"/><circle cx="596.400" cy="85" r="1.100" fill="#17171b"/><path d="M590.400 94.600h12" stroke="#17171b" stroke-width="1.300"/><rect x="634" y="53.600" width="21.600" height="15.600" fill="#c9ccd2"/><path d="M644.600 53.600h-10.600v15.600h10" stroke="#d22424" stroke-width="3.200" fill="none"/><path d="M644.600 53.600h11v15.600h-11" stroke="#26349e" stroke-width="3.200" fill="none"/><rect x="643" y="49.600" width="3.400" height="3" fill="#c8283a"/><rect x="643.400" y="70.400" width="3" height="2.400" fill="#2a4a8a"/><path d="M650.400 60.600v13.200M643.800 67.200h13.200" stroke="#8a8a20" stroke-width="5.200"/><path d="M650.400 61.400v11.600M644.600 67.200h11.600" stroke="#f4e624" stroke-width="3.600"/><rect x="677.200" y="51.600" width="9.800" height="6.200" fill="#e4e6ee"/><path d="M682 51.600h-4.800v6.200h4.800" stroke="#d22a2a" stroke-width="2" fill="none"/><path d="M682 51.600h5v6.200h-5" stroke="#2a3aa0" stroke-width="2" fill="none"/><rect x="681" y="49" width="2.200" height="1.800" fill="#c8283a"/><rect x="681" y="58.600" width="2.200" height="1.600" fill="#2a3aa0"/><text x="675.600" y="76" font-family="Liberation Sans" font-size="11.500" fill="#3a84c6" textLength="13.400" lengthAdjust="spacingAndGlyphs">ςς</text><rect x="678" y="89.600" width="9.600" height="6.800" fill="#b9bbb8"/><path d="M677 89.400q5.600-7.600 11.400 0" stroke="#3c56a8" stroke-width="1.600" fill="none"/><path d="M682.600 84v12.400" stroke="#1c1c22" stroke-width="1.900"/><path d="M677.400 89.600h10.600" stroke="#1c1c22" stroke-width="1.200"/><path d="M729.800 52.400v17.600M735.200 57.400v14" stroke="#85878e" stroke-width="2.400"/><path d="M729 53.400h19M734.400 58.800h15" stroke="#8d8f96" stroke-width="2.400"/><path d="M736 51.400h12.600" stroke="#b6b8be" stroke-width="1.200"/><path d="M732.800 51.600l11.800 15" stroke="#f4f0f2" stroke-width="3.600"/><path d="M731 50.600L744.800 67.600" stroke="#d02444" stroke-width="1.700"/><path d="M745.600 68.400l-5-1.600 3.400-3z" fill="#d02444"/><path d="M730.400 49.600v4M732.800 49.600v4" stroke="#d02444" stroke-width="1"/><path d="M800.200 70.800L810.400 57" stroke="#c89616" stroke-width="5.600" stroke-linecap="round"/><path d="M800 70L810 56.600" stroke="#f4cc2c" stroke-width="3.800" stroke-linecap="round"/><path d="M810.600 56.800l5.400-7" stroke="#e6e6e8" stroke-width="3.400"/><path d="M810.600 56.800l5.400-7" stroke="#a9abb0" stroke-width="1"/><path d="M805 51.800q5.600-4.400 11.800-1.400q3 1.800 4 5.200" stroke="#6c6e74" stroke-width="3" fill="none" stroke-linecap="round"/><path d="M805.400 51q5.600-3.600 11-1" stroke="#d4d6da" stroke-width="1.200" fill="none"/><ellipse cx="805" cy="71.600" rx="6" ry="1.200" fill="#b4b6ba" opacity="0.700"/><path d="M840.400 51.400l3-2.800h8l-0.400 8.600-3 2.800h-7.600z" fill="#4f9c8a"/><path d="M843.400 48.600h8l-3 2.800h-8z" fill="#86c4b0"/><rect x="841.400" y="52.600" width="6" height="6" fill="#e8dfe2"/><path d="M842 56.400l2-2.400 1.400 2 1.600-2.400" stroke="#d02a4c" stroke-width="1.300" fill="none"/><path d="M840.400 59.600h7.600" stroke="#d23a5a" stroke-width="1.200"/><path d="M841 67.400l7.600-1.400 1 1.600-3.200 1v6.400l2.600 1.400-1 1.800-8 0.600-.6-1.600 3.200-1.200v-6.400l-2.600-0.800z" fill="#555a64"/><path d="M844.600 68.800l1.400-0.200v6.400l-1.400 0.400z" fill="#9aa0aa"/><rect x="839.600" y="83.800" width="12.200" height="12.400" fill="#ebe4d8"/><path d="M840 84.400h5.400v3h-5.400zM846.200 84.400h5.200v3h-5.200zM840 88.400h2.400v3h-2.400zM843.200 88.400h5.400v3h-5.400zM849.400 88.400h2v3h-2zM840 92.400h5.400v3.200h-5.400zM846.200 92.400h5.200v3.200h-5.200z" fill="#c6a47e"/><path d="M907.400 66.400l17-4.800 5.400 3.400-17.600 5.400z" fill="#a9cc62"/><path d="M907.400 66.400l4.800 4v1.400l-4.800-3.800zM912.200 70.400l17.600-5.400v1.400l-17.600 5.400z" fill="#dcc05a"/><path d="M907 53.400l6.600-3.200v15l-6.600 2.200z" fill="#2744a8"/><path d="M913.600 50.200l3.600 1.400v14l-3.600-.4z" fill="#7f9ee0"/><path d="M908.600 54.800v11.400M910.400 54v11.600M912.200 53v12" stroke="#5a78d0" stroke-width="0.700"/><rect x="920.200" y="56.600" width="3.400" height="11.200" rx="1" fill="#d62c48"/><rect x="920.800" y="57" width="1" height="10.400" fill="#f08a9a"/><path d="M939.600 50l10.400 8.800" stroke="#8d9096" stroke-width="2.800"/><path d="M940.200 49.600l10.400 8.800" stroke="#55585e" stroke-width="0.800"/><path d="M948.200 48.400v6.400M945 51.600h6.400" stroke="#26264e" stroke-width="1.500"/><path d="M941.400 67.400l9.400 8.400M944.200 66.400l7.400 6.600M940.400 70.400l8 7.200M947 66l4.400 4" stroke="#49586e" stroke-width="1.700"/><path d="M942.200 71.800v6.400M939 75h6.400" stroke="#26264e" stroke-width="1.500"/><path d="M940 84.600h4.400l-2.200 3zM942.200 95.600l-2.200-3h4.400z" fill="#c8283a"/><path d="M942.200 95.600l-2.200-3h4.400z" fill="#3a8a5a"/><path d="M939.600 90h6" stroke="#56606a" stroke-width="1.100"/><path d="M949 85.400v6.400M946 88.600h6M946 93.400h6" stroke="#23232c" stroke-width="1.500"/><ellipse cx="966" cy="51.600" rx="6.200" ry="1.800" fill="#dcb48a" stroke="#b48a5c" stroke-width="0.600"/><path d="M966 52.600v7" stroke="#3a4868" stroke-width="1.900"/><path d="M962.400 53.400h7.200" stroke="#3a4868" stroke-width="1.200"/><ellipse cx="965" cy="68" rx="6.200" ry="1.800" fill="#dcb48a" stroke="#b48a5c" stroke-width="0.600"/><path d="M965 69v6" stroke="#3a4868" stroke-width="1.700"/><text x="966.400" y="78.400" font-family="Liberation Serif" font-weight="bold" font-size="8.600" fill="#3a4868">P</text><rect x="959.400" y="87.600" width="8" height="3.400" fill="#d22e30"/><rect x="959.400" y="91.600" width="3.600" height="3.800" fill="#cfa67c"/><rect x="963.800" y="91.600" width="3.600" height="3.800" fill="#cfa67c"/><rect x="959.200" y="87.200" width="8.400" height="8.600" fill="none" stroke="#a88a6a" stroke-width="0.600"/><text x="968.400" y="90.400" font-family="Liberation Serif" font-size="7" fill="#3a3a5a">£</text><path d="M1010.800 54.400l6.200-4.200v2.600q10.400-1 13.600 6.600q-4.800-3.800-13.600-3.600v2.800z" fill="#57ac34" stroke="#3a8a24" stroke-width="0.600"/><path d="M1019.600 64.400l7.600-8.200 2.600 2.400-7.600 8.200-3.400 1z" fill="#f2c638" stroke="#b88a1a" stroke-width="0.500"/><path d="M1027.200 56.200l1.800-1.900 2.600 2.400-1.800 1.900z" fill="#f2a6b4"/><path d="M1019.600 64.400l-0.800 3.400 3.400-1z" fill="#3a3a3a"/><text x="1017" y="72.400" font-family="Liberation Serif" font-weight="bold" font-size="11.500" fill="#37463e" textLength="16.400" lengthAdjust="spacingAndGlyphs">№</text><circle cx="1015.400" cy="69.600" r="0.900" fill="#37463e"/><rect x="1070.600" y="49" width="3.200" height="12" fill="#2b3284"/><path d="M1068.600 59.400h7.200l-3.600 6.200z" fill="#2b3284"/><path d="M1071.200 49v11" stroke="#5a66c0" stroke-width="0.800"/><circle cx="1072.100" cy="69.900" r="2.900" fill="#d6e26a" stroke="#9aa63e" stroke-width="1"/><path d="M1098.400 53.600h8.200l0.600 7.200h-9.400z" fill="#e3e4e6" stroke="#9c9ea3" stroke-width="0.700"/><rect x="1100.800" y="49.400" width="3.400" height="4.200" rx="1" fill="#eeeff0" stroke="#a4a6aa" stroke-width="0.700"/><rect x="1101.600" y="55" width="1.800" height="4.600" fill="#878a90"/><path d="M1099.400 66.200v7M1102.600 66.200v7M1105.800 66.200v7" stroke="#484e70" stroke-width="1.300"/><path d="M1097.900 71.600h3l-1.500 2.600zM1101.100 71.600h3l-1.500 2.600zM1104.300 71.600h3l-1.500 2.600z" fill="#484e70"/><path d="M1096.800 77l11.400-2.400" stroke="#484e70" stroke-width="1.200"/><path d="M1106.600 84l-7.400 9.600M1099 85.600l7.400 8" stroke="#3a3e52" stroke-width="1.300"/><circle cx="1098.200" cy="94.400" r="2" fill="none" stroke="#56b0b0" stroke-width="1.500"/><circle cx="1107" cy="94.400" r="2" fill="none" stroke="#56b0b0" stroke-width="1.500"/><path d="M1096.600 88.800l6-3" stroke="#30304a" stroke-width="2.200"/><rect x="1126" y="48.800" width="7.600" height="8" rx="1" fill="#eef0f6" stroke="#2c3272" stroke-width="1.100"/><rect x="1130" y="52" width="7.600" height="8" rx="1" fill="#e6e8f2" stroke="#2c3272" stroke-width="1.200"/><path d="M1132 55.600h3.600M1133.800 53.800v3.600" stroke="#2c3272" stroke-width="1.300"/><path d="M1157.400 62l6.400-8.400" stroke="#f2f4f6" stroke-width="2.600"/><path d="M1166.600 57.200l-4.200-5.600" stroke="#2e3a9a" stroke-width="1.400"/><path d="M1161.400 50.200l3.200 1.400-2.200 1.800z" fill="#2e3a9a"/><path d="M1166.600 57.200l10.200-4.800" stroke="#2f9a4e" stroke-width="1.400"/><path d="M1178.400 51.600l-3.400.2 1.600 2.600z" fill="#2f9a4e"/><path d="M1168.100 63v7.200" stroke="#d82a2a" stroke-width="1.700"/><path d="M1166.100 63.800l2-3 2 3zM1166.100 69.400l2 3 2-3z" fill="#d82a2a"/><text x="1171" y="70.200" font-family="Liberation Serif" font-weight="bold" font-size="11.500" fill="#23332c" textLength="9.400" lengthAdjust="spacingAndGlyphs">G</text><rect x="1189" y="48.800" width="4.300" height="2.800" fill="#e7aab0"/><rect x="1193.300" y="48.800" width="4.300" height="2.800" fill="#ecdcaa"/><rect x="1197.600" y="48.800" width="4.300" height="2.800" fill="#a9bcd8"/><path d="M1198 53.600v4M1196.600 56l1.400 2 1.400-2" stroke="#b4b8c4" stroke-width="0.900" fill="none"/><rect x="1186.400" y="63.600" width="20.600" height="17" rx="1.600" fill="url(#selg)" stroke="#d6a440" stroke-width="1"/><rect x="1189" y="66.200" width="2.500" height="2.500" fill="#d23030"/><rect x="1191.500" y="66.200" width="2.500" height="2.500" fill="#e6c82a"/><rect x="1194" y="66.200" width="2.500" height="2.500" fill="#3a9a4a"/><rect x="1196.500" y="66.200" width="2.500" height="2.500" fill="#2a50b8"/><rect x="1199" y="66.200" width="2.500" height="2.500" fill="#d23030"/><path d="M1193.400 71.600q-2.400 2.400 0 4.800M1200 71.600q2.400 2.400 0 4.800" stroke="#30302a" stroke-width="1.300" fill="none"/><path d="M1196.800 68.800v3M1195 71.200l1.800 2 1.800-2zM1195 76.600l1.800 2 1.800-2z" stroke="#1e1e1a" stroke-width="0.800" fill="#1e1e1a"/><rect x="1189" y="84.600" width="3.200" height="2.800" fill="#d23a3a"/><rect x="1192.200" y="84.600" width="3.200" height="2.800" fill="#d8b04a"/><rect x="1195.400" y="84.600" width="3.200" height="2.800" fill="#3a62b8"/><rect x="1198.600" y="84.600" width="3" height="2.800" fill="#d23a3a"/><circle cx="1195.200" cy="90.600" r="3.600" fill="#dfeaf2" stroke="#39607e" stroke-width="1.200"/><path d="M1197.800 93.200l3.600 3" stroke="#1c1c24" stroke-width="2.200"/><path d="M1195.200 88v2.600" stroke="#264a9a" stroke-width="1.200"/><text x="1217.300" y="58" font-family="Liberation Sans" font-size="10" fill="#bfc2cc" textLength="12" lengthAdjust="spacingAndGlyphs">1,2)</text><path d="M1218 68v9.600h11.600v-5q-7.600 0-11.600-4.600z" fill="#f4dde2" stroke="#c04e6e" stroke-width="1.100"/><path d="M1220.800 71v6.600M1223.600 72.600v5M1226.400 73v4.600" stroke="#c04e6e" stroke-width="1"/><rect x="1218" y="83.600" width="5.800" height="5.800" fill="#ee7e2e"/><rect x="1224.200" y="83.600" width="5.800" height="5.800" fill="#f6ee46"/><rect x="1224.200" y="89.800" width="5.800" height="6" fill="#df6c2c"/><path d="M1222.600 90.400q-4.400 1-3 5" stroke="#33333c" stroke-width="1.200" fill="none"/><rect x="1219.400" y="91.200" width="4" height="4.200" fill="#f6f6f8"/><text x="1245.200" y="58.800" font-family="Liberation Serif" font-weight="bold" font-size="12.500" fill="#28503e" textLength="8" lengthAdjust="spacingAndGlyphs">Σ</text><path d="M1256.200 49.600v7" stroke="#36389a" stroke-width="1.700"/><path d="M1254 55.600h4.400l-2.200 3.400z" fill="#36389a"/><rect x="1246.600" y="67.200" width="4" height="5.200" fill="#f2c674"/><rect x="1250.600" y="67.200" width="3.600" height="5.200" fill="#f6e4c0"/><rect x="1246.600" y="72.400" width="7.600" height="5.800" fill="#c42222"/><path d="M1256.200 68v7.600" stroke="#2b2b7c" stroke-width="1.800"/><path d="M1254 74.600h4.400l-2.200 3.600z" fill="#2b2b7c"/><rect x="1246.400" y="67" width="8" height="11.400" fill="none" stroke="#7a4a2a" stroke-width="0.600"/><rect x="1246.600" y="83.600" width="5.600" height="5.600" fill="#ee7e2e"/><rect x="1252.600" y="83.600" width="5.600" height="5.600" fill="#f6ee46"/><rect x="1252.600" y="89.600" width="5.600" height="6.200" fill="#e67a2e"/><rect x="1248.400" y="89.200" width="2.200" height="6.800" fill="#21213c"/></g></svg>
<svg class="abs" style="left:0;top:0" width="1280" height="945" viewBox="0 0 1280 945"><defs><linearGradient id="sg2" x1="0" y1="0" x2="0" y2="1"><stop offset="0" stop-color="#f4bf70"/><stop offset="0.35" stop-color="#f8d089"/><stop offset="0.7" stop-color="#fad575"/><stop offset="1" stop-color="#f7c64f"/></linearGradient><linearGradient id="sg3" x1="0" y1="0" x2="0" y2="1"><stop offset="0" stop-color="#f3a245"/><stop offset="0.45" stop-color="#f6b75a"/><stop offset="0.75" stop-color="#fbe3a0"/><stop offset="1" stop-color="#fbe9b0"/></linearGradient><filter id="b4" x="-20%" y="-2%" width="140%" height="104%"><feGaussianBlur stdDeviation="0.5"/></filter></defs><g filter="url(#b4)"><rect x="6.3" y="120.3" width="1.7" height="1.7" fill="#4d4d55"/><rect x="7.2" y="121.6" width="1.2" height="1.2" fill="#f4f4f6"/><rect x="9.4" y="120.3" width="1.7" height="1.7" fill="#4d4d55"/><rect x="10.3" y="121.6" width="1.2" height="1.2" fill="#f4f4f6"/><rect x="12.5" y="120.3" width="1.7" height="1.7" fill="#4d4d55"/><rect x="13.4" y="121.6" width="1.2" height="1.2" fill="#f4f4f6"/><rect x="15.6" y="120.3" width="1.7" height="1.7" fill="#4d4d55"/><rect x="16.5" y="121.6" width="1.2" height="1.2" fill="#f4f4f6"/><rect x="4.2" y="126" width="16.2" height="26.6" rx="1" fill="url(#sg2)"/><circle cx="12.5" cy="134.9" r="5.2" fill="#f6f8f6" stroke="#4a4f48" stroke-width="1.2"/><path d="M12.5 131.300l3.600 3.600-3.600 3.600-3.600-3.600z" fill="#5cb232" stroke="#3a7a22" stroke-width="0.600"/><path d="M12.5 128.800v2.200M12.5 138.800v2.200M6.400 134.900h2.200M16.400 134.900h2.200" stroke="#2a2d2a" stroke-width="1.300"/><path d="M11.0 146.0L14.3 148.3L11.0 150.6Z" fill="#3a3020"/><path d="M7.600 157v11M11.400 157v11M15.200 157v11M18.400 157v11" stroke="#c23456" stroke-width="1.500"/><path d="M7.600 157v11" stroke="#4a7f9c" stroke-width="1.500"/><path d="M6.800 159.600h12.400M6.800 163.800h12.400" stroke="#c23456" stroke-width="1.600"/><rect x="12.400" y="160.400" width="2" height="2.600" fill="#e8d8e0"/><ellipse cx="12.5" cy="181.700" rx="5.600" ry="5.400" fill="#f7f8f9" stroke="#9a9da4" stroke-width="0.800"/><rect x="7" y="180.600" width="11" height="2.200" fill="#26262a"/><path d="M11.0 192.1L14.3 194.4L11.0 196.7Z" fill="#46464a"/><ellipse cx="12.5" cy="209.200" rx="5.400" ry="5.800" fill="#f7f8f9" stroke="#9a9da4" stroke-width="0.800"/><path d="M10.900 203.800v10.800M14.100 203.800v10.800" stroke="#26262a" stroke-width="1.700"/><ellipse cx="12.5" cy="227.200" rx="5.600" ry="5.200" fill="#f7f8f9"/><path d="M6.900 225.200h11.200M6.900 229.200h11.200" stroke="#26262a" stroke-width="1.800"/><circle cx="12.5" cy="245.200" r="4.800" fill="#f7f8f9" stroke="#8a8d94" stroke-width="0.800"/><circle cx="12.5" cy="245.200" r="2.300" fill="#7cc244"/><path d="M12.5 238.800v4M12.5 247.600v4M6 245.200h4M15 245.200h4" stroke="#22252a" stroke-width="1.400"/><rect x="7.600" y="258.600" width="9.600" height="10" fill="#f4f5f6"/><path d="M9.800 257.600v11.600M14.800 257.600v11.600M6.400 261.400h12M6.400 266h12" stroke="#22252a" stroke-width="1.300"/><path d="M11.0 274.6L14.3 276.9L11.0 279.2Z" fill="#46464a"/><circle cx="12.200" cy="292.200" r="5.600" fill="#f6f7fa" stroke="#282a4e" stroke-width="1.300"/><text x="8.200" y="295.400" font-family="Liberation Sans" font-weight="bold" font-size="8.400" fill="#282a4e" textLength="8.400" lengthAdjust="spacingAndGlyphs">EF</text><path d="M11.0 302.9L14.3 305.2L11.0 307.5Z" fill="#46464a"/><circle cx="11.800" cy="320.600" r="5.400" fill="#f6f7fa" stroke="#a8abb2" stroke-width="0.800"/><path d="M6.800 316l9 8" stroke="#25252c" stroke-width="2.200"/><path d="M12.400 320.400l1.400 1.200" stroke="#d03030" stroke-width="2.200"/><path d="M13.800 321.800l1 .9" stroke="#e6d040" stroke-width="2.200"/><path d="M14.800 322.800l1 .8" stroke="#3a9a4a" stroke-width="2.200"/><rect x="11.6" y="333.200" width="1.800" height="1.900" fill="#3c3c42"/><path d="M6 344h13l-5.400 6.200v3.800l-2.200-1v-2.800z" fill="#f4f5f6" stroke="#56585e" stroke-width="1.100"/><path d="M8.600 372v-6.200h8.400v6.200M12.800 365.800v6.200M8 368.600h9.600" stroke="#8e8f98" stroke-width="1" fill="none"/><path d="M7.600 366q0.400-5.600 5.200-5.400q4.400 0.400 4 4.600M9.400 363.400l3.400 3.600M7.400 367.400h5" stroke="#c5182e" stroke-width="1.500" fill="none"/><rect x="6.3" y="378.2" width="12.7" height="1.2" fill="#eeeef0"/><path d="M10 391.200h7.200v5.400h-7.200zM11.400 391v-2.600q2.400-2.600 4.800 0v2.600" stroke="#c2c4ce" stroke-width="1.200" fill="none"/><path d="M7 389.600l3-2.200v4.400z" fill="#c2c4ce"/><path d="M6.400 406.400l8-2.800 3.600 1.200v7.400l-8 2.600-3.600-1z" fill="#d42638" stroke="#3b4c9c" stroke-width="0.900"/><path d="M7.200 408.600l9.800-3M7.200 411l9.800-3" stroke="#f0dde2" stroke-width="0.900"/><path d="M8 414.400v2M15.600 412v2" stroke="#3b4c9c" stroke-width="1.100"/><rect x="6.3" y="420.3" width="12.7" height="1.2" fill="#eeeef0"/><circle cx="11" cy="431" r="4.300" fill="#f4f5f7" stroke="#9a9ca4" stroke-width="1"/><path d="M12.600 430l4 4.400M16.600 430l-4 4.400" stroke="#c21032" stroke-width="1.700"/><path d="M14.800 434.600l3 3.400" stroke="#2c2c34" stroke-width="2"/><rect x="6.3" y="444.0" width="12.7" height="1.2" fill="#eeeef0"/><path d="M7.400 452l5.200 5.800" stroke="#b8672c" stroke-width="2.600"/><path d="M6.800 451.400l2 2" stroke="#7c4a22" stroke-width="2.800"/><path d="M11 456.400l3.600-2.400 3.800 5.600-4.200 3.400z" fill="#e9a030"/><ellipse cx="15.400" cy="460.600" rx="3.300" ry="3.100" fill="#f6ec3c"/><text x="9.800" y="480" font-family="Liberation Serif" font-style="italic" font-weight="bold" font-size="11" fill="#2a2a32">L</text><rect x="6" y="479.400" width="1.200" height="1.200" fill="#8a8c94"/><rect x="17.400" y="479.400" width="1.200" height="1.200" fill="#8a8c94"/><path d="M11.1 486.8L14.4 489.1L11.1 491.4Z" fill="#46464a"/><path d="M7.600 498.400l6.400 1.600 4-1.600v8l-4 1.600-6.400-1.800z" fill="#da2424"/><path d="M8.400 510l8.400-7.600 1.400 1.400-8.200 7.200-2.200.6z" fill="#f0cc3a" stroke="#9a7a1a" stroke-width="0.400"/><path d="M16.400 515.600l3.400 2.600-3.400 2.600z" fill="#f2f2f4"/><rect x="19.700" y="515.800" width="1" height="5" fill="#bfc0c4"/><rect x="1260.6" y="120.3" width="1.7" height="1.7" fill="#4d4d55"/><rect x="1261.5" y="121.6" width="1.2" height="1.2" fill="#f4f4f6"/><rect x="1263.7" y="120.3" width="1.7" height="1.7" fill="#4d4d55"/><rect x="1264.6" y="121.6" width="1.2" height="1.2" fill="#f4f4f6"/><rect x="1266.8" y="120.3" width="1.7" height="1.7" fill="#4d4d55"/><rect x="1267.7" y="121.6" width="1.2" height="1.2" fill="#f4f4f6"/><rect x="1269.9" y="120.3" width="1.7" height="1.7" fill="#4d4d55"/><rect x="1270.8" y="121.6" width="1.2" height="1.2" fill="#f4f4f6"/><path d="M1262.600 138v-9" stroke="#d22a44" stroke-width="1.400"/><path d="M1260.800 130.200l1.800-3 1.800 3z" fill="#d22a44"/><path d="M1262.600 138l7.600-6.800" stroke="#27306e" stroke-width="1.500"/><path d="M1271.400 130l-3.400.8 2 2.200z" fill="#27306e"/><path d="M1262.600 138h8" stroke="#2f9f6a" stroke-width="1.400"/><path d="M1272.400 138l-2.800-1.600v3.200z" fill="#2f9f6a"/><rect x="1258.500" y="144" width="16.500" height="16" rx="1" fill="url(#sg3)"/><path d="M1267 155.600v-7" stroke="#2a1c14" stroke-width="1.500"/><path d="M1265.300 149.400l1.700-2.800 1.700 2.800z" fill="#c22a2a"/><path d="M1261.600 153.200q1.600 3.400 5.400 2.600q3.800.8 5.400-2.600" stroke="#2a1c14" stroke-width="1.600" fill="none"/><path d="M1260.600 152.200l2.600.4-1.400 2z" fill="#3a7a2a"/><path d="M1273.400 152.200l-2.600.4 1.400 2z" fill="#3a7a2a"/><path d="M1262.200 175.3v-9" stroke="#d22a44" stroke-width="1.400"/><path d="M1260.500 167.10000000000002l1.700-3 1.700 3z" fill="#d22a44"/><path d="M1262.200 175.3h8.400" stroke="#2f9f6a" stroke-width="1.400"/><path d="M1272.200 175.3l-2.800-1.500v3z" fill="#2f9f6a"/><circle cx="1262.200" cy="175.3" r="1.500" fill="#27306e"/><text x="1264.600" y="172.70000000000002" font-family="Liberation Sans" font-size="6.800" fill="#5c7484" textLength="8" lengthAdjust="spacingAndGlyphs">XZ</text><path d="M1265.5 182.0L1268.8 184.3L1265.5 186.6Z" fill="#46464a"/><path d="M1262.200 203.4v-9" stroke="#27306e" stroke-width="1.400"/><path d="M1260.500 195.20000000000002l1.700-3 1.700 3z" fill="#27306e"/><path d="M1262.200 203.4h8.400" stroke="#2f9f6a" stroke-width="1.400"/><path d="M1272.200 203.4l-2.800-1.500v3z" fill="#2f9f6a"/><circle cx="1262.200" cy="203.4" r="1.500" fill="#d22a44"/><text x="1264.600" y="200.8" font-family="Liberation Sans" font-size="6.800" fill="#5c7484" textLength="8" lengthAdjust="spacingAndGlyphs">XY</text><path d="M1265.5 210.0L1268.8 212.3L1265.5 214.6Z" fill="#46464a"/><path d="M1262.200 232.2v-9" stroke="#d22a44" stroke-width="1.400"/><path d="M1260.500 224.0l1.700-3 1.700 3z" fill="#d22a44"/><path d="M1262.200 232.2h8.400" stroke="#3a3ea0" stroke-width="1.400"/><path d="M1272.200 232.2l-2.800-1.500v3z" fill="#3a3ea0"/><circle cx="1262.200" cy="232.2" r="1.500" fill="#2f9f6a"/><text x="1264.600" y="229.6" font-family="Liberation Sans" font-size="6.800" fill="#5c7484" textLength="8" lengthAdjust="spacingAndGlyphs">YZ</text><path d="M1265.2 238.8L1268.5 241.1L1265.2 243.4Z" fill="#46464a"/><path d="M1260.600 260.400l3.400-8h8.600l-3.400 8z" fill="#fafafb"/><path d="M1262.400 259.600l2.600-6.400M1265.600 259.600l2.600-6.400M1268.600 259.600l2.600-6.400M1262.600 258h8M1263.600 255.200h8" stroke="#2a2c3a" stroke-width="0.900"/><path d="M1263.300 271.400a4.800 4.800 0 1 0 5 -1.800" stroke="#23284e" stroke-width="2.300" fill="none"/><path d="M1261 272.800l1.200-4.600 3.600 3.400z" fill="#23284e"/><path d="M1265.2 285.2L1268.5 287.5L1265.2 289.8Z" fill="#46464a"/><path d="M1262.200 306.600v-9M1262.200 306.600l7.800-7.800M1262.200 306.600h8.800" stroke="#d22a44" stroke-width="1.400" fill="none"/><path d="M1260.500 298.800l1.700-3 1.700 3zM1271.200 297.400l-3.200.8 2.400 2.400zM1272.600 306.600l-2.800-1.600v3.200z" fill="#d22a44"/><path d="M1269.200 315.600l3.400 2.500-3.400 2.500z" fill="#f2f2f4"/><rect x="1272.500" y="315.800" width="1" height="4.800" fill="#bfc0c4"/><rect x="1260.6" y="324.6" width="1.7" height="1.7" fill="#4d4d55"/><rect x="1261.5" y="325.9" width="1.2" height="1.2" fill="#f4f4f6"/><rect x="1263.7" y="324.6" width="1.7" height="1.7" fill="#4d4d55"/><rect x="1264.6" y="325.9" width="1.2" height="1.2" fill="#f4f4f6"/><rect x="1266.8" y="324.6" width="1.7" height="1.7" fill="#4d4d55"/><rect x="1267.7" y="325.9" width="1.2" height="1.2" fill="#f4f4f6"/><rect x="1269.9" y="324.6" width="1.7" height="1.7" fill="#4d4d55"/><rect x="1270.8" y="325.9" width="1.2" height="1.2" fill="#f4f4f6"/><rect x="1258.700" y="331" width="16.400" height="15" rx="1" fill="url(#sg3)"/><path d="M1261.7 336.0l3.2 -3.2h7.4l-3.2 3.2z" fill="#3a4650" stroke="#222428" stroke-width="1.3" stroke-linejoin="round"/><path d="M1269.1 336.0l3.2 -3.2v7.4l-3.2 3.2z" fill="#2c3640" stroke="#222428" stroke-width="1.3" stroke-linejoin="round"/><rect x="1261.7" y="336.0" width="7.4" height="7.4" fill="#c4dbe6" stroke="#222428" stroke-width="1.3" stroke-linejoin="round"/><path d="M1262 351.200h10.600" stroke="#d42a3a" stroke-width="1.400"/><path d="M1261.7 355.1l3.2 -3.2h7.4l-3.2 3.2z" fill="#77828c" stroke="#3e4048" stroke-width="1.1" stroke-linejoin="round"/><path d="M1269.1 355.1l3.2 -3.2v7.4l-3.2 3.2z" fill="#46525e" stroke="#3e4048" stroke-width="1.1" stroke-linejoin="round"/><rect x="1261.7" y="355.1" width="7.4" height="7.4" fill="#dbe5ee" stroke="#3e4048" stroke-width="1.1" stroke-linejoin="round"/><rect x="1266.600" y="368.600" width="7" height="7.400" rx="1" fill="#cdeaf8" stroke="#3cb0e4" stroke-width="1.300"/><path d="M1260.3 373.5l3.2 -3.2h7.4l-3.2 3.2z" fill="#77828c" stroke="#3e4048" stroke-width="1.1" stroke-linejoin="round"/><path d="M1267.7 373.5l3.2 -3.2v7.4l-3.2 3.2z" fill="#46525e" stroke="#3e4048" stroke-width="1.1" stroke-linejoin="round"/><rect x="1260.3" y="373.5" width="7.4" height="7.4" fill="#dbe5ee" stroke="#3e4048" stroke-width="1.1" stroke-linejoin="round"/><path d="M1261 389.600v8" stroke="#4aaa4a" stroke-width="1.400"/><path d="M1262.1 390.7l3.2 -3.2h7.4l-3.2 3.2z" fill="#77828c" stroke="#3e4048" stroke-width="1.1" stroke-linejoin="round"/><path d="M1269.5 390.7l3.2 -3.2v7.4l-3.2 3.2z" fill="#46525e" stroke="#3e4048" stroke-width="1.1" stroke-linejoin="round"/><rect x="1262.1" y="390.7" width="7.4" height="7.4" fill="#dbe5ee" stroke="#3e4048" stroke-width="1.1" stroke-linejoin="round"/><path d="M1260.200 407.400v-2.800h2.800M1270.400 404.600h2.800v2.800M1260.200 413v2.800h2.800M1270.400 415.800h2.800v-2.800" stroke="#d42a44" stroke-width="1.400" fill="none"/><path d="M1261.9 408.1l2.8 -2.8h6.6l-2.8 2.8z" fill="#77828c" stroke="#3e4048" stroke-width="1.1" stroke-linejoin="round"/><path d="M1268.5 408.1l2.8 -2.8v6.6l-2.8 2.8z" fill="#46525e" stroke="#3e4048" stroke-width="1.1" stroke-linejoin="round"/><rect x="1261.9" y="408.1" width="6.6" height="6.6" fill="#dbe5ee" stroke="#3e4048" stroke-width="1.1" stroke-linejoin="round"/><rect x="1271" y="424" width="1.800" height="6.600" rx="0.900" fill="#58c458"/><path d="M1260.5 425.7l3.2 -3.2h7.4l-3.2 3.2z" fill="#77828c" stroke="#3e4048" stroke-width="1.1" stroke-linejoin="round"/><path d="M1267.9 425.7l3.2 -3.2v7.4l-3.2 3.2z" fill="#46525e" stroke="#3e4048" stroke-width="1.1" stroke-linejoin="round"/><rect x="1260.5" y="425.7" width="7.4" height="7.4" fill="#dbe5ee" stroke="#3e4048" stroke-width="1.1" stroke-linejoin="round"/><path d="M1262.5 441.7l3.2 -3.2h7.4l-3.2 3.2z" fill="#77828c" stroke="#3e4048" stroke-width="1.1" stroke-linejoin="round"/><path d="M1269.9 441.7l3.2 -3.2v7.4l-3.2 3.2z" fill="#46525e" stroke="#3e4048" stroke-width="1.1" stroke-linejoin="round"/><rect x="1262.5" y="441.7" width="7.4" height="7.4" fill="#d2dae2" stroke="#3e4048" stroke-width="1.1" stroke-linejoin="round"/><rect x="1260.600" y="445.200" width="7" height="7" fill="#a6e0fa" stroke="#3cb0e4" stroke-width="1.100"/><path d="M1261.3 460.3l3.2 -3.2h7.4l-3.2 3.2z" fill="#77828c" stroke="#3e4048" stroke-width="1.1" stroke-linejoin="round"/><path d="M1268.7 460.3l3.2 -3.2v7.4l-3.2 3.2z" fill="#46525e" stroke="#3e4048" stroke-width="1.1" stroke-linejoin="round"/><rect x="1261.3" y="460.3" width="7.4" height="7.4" fill="#dbe5ee" stroke="#3e4048" stroke-width="1.1" stroke-linejoin="round"/><path d="M1262 469.600h9.400" stroke="#d42a3a" stroke-width="1.400"/><path d="M1267 476.200l4.600 2.600v5.400l-4.600 2.800-4.600-2.800v-5.400z" fill="#f4f6f8" stroke="#4a5058" stroke-width="1"/><path d="M1267 476.200l4.600 2.600-4.600 2.800-4.600-2.800z" fill="#6ab6b8"/><path d="M1267 481.600l4.600-2.800v5.400l-4.600 2.800z" fill="#3a4450"/><path d="M1270.400 494.600l3.400 2.500-3.400 2.500z" fill="#f2f2f4"/><rect x="1273.700" y="494.800" width="1" height="4.800" fill="#bfc0c4"/></g></svg>
<svg class="abs" style="left:0;top:0" width="1280" height="945" viewBox="0 0 1280 945"><defs><linearGradient id="cur" x1="0" y1="0" x2="1" y2="1"><stop offset="0" stop-color="#8cc8f0"/><stop offset="0.55" stop-color="#3f7fcc"/><stop offset="1" stop-color="#27408c"/></linearGradient><filter id="b5" x="-20%" y="-20%" width="140%" height="140%"><feGaussianBlur stdDeviation="0.5"/></filter></defs><g filter="url(#b5)"><path d="M338.200 368v14.200l3.400-3 2.600 5.400 2.200-1-2.600-5.200 4.600-.6z" fill="url(#cur)" stroke="#1c2350" stroke-width="1"/><path d="M357.300 381.800l3.600 3.400-3.600 3.400-3.600-3.400z" fill="#8a9a90" stroke="#6c7c74" stroke-width="0.800"/><circle cx="357.300" cy="385.200" r="1.200" fill="#b8c4bc"/><path d="M57 897v-15" stroke="#d01820" stroke-width="1"/><path d="M55.200 884.200l1.800-3.400 1.800 3.400" stroke="#d01820" stroke-width="1" fill="none"/><path d="M57 897l-9.600-3.400" stroke="#2020c0" stroke-width="1"/><path d="M50.800 892.400l-3.600 1.200 2.600 2.800" stroke="#2020c0" stroke-width="1" fill="none"/><path d="M57 897l10.400-3.400" stroke="#1c8a2c" stroke-width="1"/><path d="M63.600 892.400l3.800 1.200-2.600 2.800" stroke="#1c8a2c" stroke-width="1" fill="none"/><text x="52.400" y="876.800" font-family="Liberation Sans" font-weight="bold" font-size="12.200" fill="#d01820">Z</text><text x="37.400" y="891.200" font-family="Liberation Sans" font-weight="bold" font-size="12.200" fill="#2020c0">Y</text><text x="67.800" y="892.200" font-family="Liberation Sans" font-weight="bold" font-size="12.200" fill="#1c8a2c">X</text><rect x="802.600" y="925.200" width="57" height="16" fill="#c9c9cb" opacity="0.550"/><path d="M805.400 930.200l3.600-2.800v1.800q5.600-.6 7.600 3.200q-3-1.800-7.600-1.600v1.800z" fill="#4ea634"/><path d="M807 938.400l7.400-8.400 2 1.800-7.400 8.400-2.600.8z" fill="#eec63a" stroke="#9a7a1a" stroke-width="0.500"/><path d="M814.400 930l1.400-1.600 2 1.800-1.400 1.600z" fill="#f0a4b4"/><text x="809.600" y="939.600" font-family="Liberation Serif" font-weight="bold" font-size="7.500" fill="#2e3a34">№</text><path d="M824.800 937l5.200-6.600 5.200 6.600z" fill="#4f9e4f" stroke="#3a7a3a" stroke-width="0.600"/><path d="M844.800 930.600h10.400l-5.200 6.600z" fill="#8f8f93"/><path d="M897 931.600h5.200l-2.600 3z" fill="#3a3a3e"/><path d="M966 931.600h5.200l-2.600 3z" fill="#3a3a3e"/><rect x="911.400" y="925.200" width="18" height="16" fill="#d6d6d8" opacity="0.700"/><path d="M915.400 938.600l6.400-8.600" stroke="#a88418" stroke-width="3.400" stroke-linecap="round"/><path d="M915.400 938.400l6.200-8.400" stroke="#f0cc34" stroke-width="2.200" stroke-linecap="round"/><path d="M921.600 930.200l2.200-3" stroke="#e4e4e6" stroke-width="2"/><path d="M919 927.600q3.600-2.400 7-.4q1.600 1.200 2 3" stroke="#74767c" stroke-width="1.900" fill="none"/><rect x="1274" y="939.5" width="1.300" height="1.300" fill="#4a4a4e"/><rect x="1274.8" y="940.3" width="1" height="1" fill="#e8e8ea"/><rect x="1271.5" y="939.5" width="1.300" height="1.300" fill="#4a4a4e"/><rect x="1272.3" y="940.3" width="1" height="1" fill="#e8e8ea"/><rect x="1274" y="937" width="1.300" height="1.300" fill="#4a4a4e"/><rect x="1274.8" y="937.8" width="1" height="1" fill="#e8e8ea"/><rect x="1269" y="939.5" width="1.300" height="1.300" fill="#4a4a4e"/><rect x="1269.8" y="940.3" width="1" height="1" fill="#e8e8ea"/><rect x="1271.5" y="937" width="1.300" height="1.300" fill="#4a4a4e"/><rect x="1272.3" y="937.8" width="1" height="1" fill="#e8e8ea"/><rect x="1274" y="934.5" width="1.300" height="1.300" fill="#4a4a4e"/><rect x="1274.8" y="935.3" width="1" height="1" fill="#e8e8ea"/></g></svg>
</body></html>
